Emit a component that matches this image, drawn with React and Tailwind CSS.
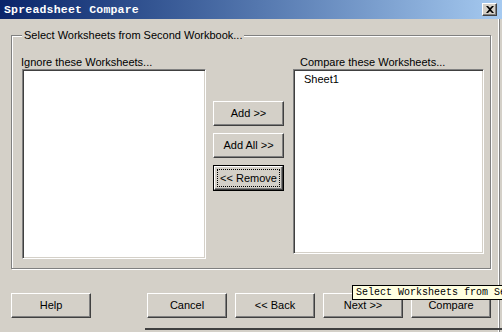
import React from "react";

const raised =
  "border border-t-white border-l-white border-r-[#404040] border-b-[#404040] shadow-[inset_-1px_-1px_0_#808080,inset_1px_1px_0_#d4d0c8] bg-[#d4d0c8]";

function Btn({ children, className = "", focused = false }) {
  if (focused) {
    return (
      <div className={`relative flex items-center justify-center border border-black bg-[#d4d0c8] ${className}`}>
        <div className="absolute inset-0 border border-t-white border-l-white border-r-[#404040] border-b-[#404040] shadow-[inset_-1px_-1px_0_#808080]" />
        <div className="absolute inset-[3px] border border-dotted border-black" />
        <span className="relative">{children}</span>
      </div>
    );
  }
  return (
    <div className={`flex items-center justify-center ${raised} ${className}`}>
      <span>{children}</span>
    </div>
  );
}

const sunken =
  "bg-white border border-t-[#808080] border-l-[#808080] border-b-white border-r-white shadow-[inset_1px_1px_0_#404040,inset_-1px_-1px_0_#d4d0c8]";

export default function App() {
  return (
    <div
      className="relative w-[502px] h-[332px] overflow-hidden bg-[#d4d0c8] flex flex-col text-[11px] text-black"
      style={{ fontFamily: '"Liberation Sans", Arial, sans-serif' }}
    >
      {/* Title bar */}
      <div className="h-[19px] flex items-center justify-between pl-[4px] pr-[5px] bg-gradient-to-r from-[#0a246a] to-[#a6caf0]">
        <span
          className="text-white font-bold text-[11.5px] leading-none tracking-[0.2px]"
          style={{ fontFamily: '"Liberation Mono", "Courier New", monospace' }}
        >
          Spreadsheet Compare
        </span>
        <div className={`w-[15px] h-[13px] flex items-center justify-center ${raised}`}>
          <svg width="8" height="7" viewBox="0 0 8 7">
            <path d="M0 0h2l2 2 2-2h2L5 3.5 8 7H6L4 5 2 7H0l3-3.5z" fill="#000" />
          </svg>
        </div>
      </div>

      {/* Body */}
      <div className="flex-1 flex flex-col pl-[11px] pr-[11px] pt-[16px]">
        {/* Group box */}
        <div className="relative h-[234px] border border-[#808080] shadow-[1px_1px_0_#fff,inset_1px_1px_0_#fff]">
          <span className="absolute left-[10px] top-[-8px] px-[2px] bg-[#d4d0c8] leading-[14px]">
            Select Worksheets from Second Workbook...
          </span>
          <div className="flex pl-[10px] pt-[19px]">
            <div className="flex flex-col">
              <span className="ml-[-1px] leading-[14px] h-[14px]">Ignore these Worksheets...</span>
              <div className={`w-[184px] h-[190px] ${sunken}`} />
            </div>
            <div className="flex flex-col gap-[7px] ml-[7px] mt-[46px]">
              <Btn className="w-[71px] h-[25px]">Add &gt;&gt;</Btn>
              <Btn className="w-[71px] h-[25px]">Add All &gt;&gt;</Btn>
              <Btn className="w-[71px] h-[26px]" focused>
                &lt;&lt; Remove
              </Btn>
            </div>
            <div className="flex flex-col ml-[9px]">
              <span className="ml-[7px] leading-[14px] h-[14px]">Compare these Worksheets...</span>
              <div className={`w-[191px] h-[185px] ${sunken} pl-[10px] pt-[1px]`}>
                <span className="leading-[13px]">Sheet1</span>
              </div>
            </div>
          </div>
        </div>

        {/* Bottom buttons */}
        <div className="flex mt-[24px] gap-[8px]">
          <Btn className="w-[80px] h-[25px]">Help</Btn>
          <div className="w-[40px]" />
          <Btn className="w-[80px] h-[25px]">Cancel</Btn>
          <Btn className="w-[80px] h-[25px]">&lt;&lt; Back</Btn>
          <Btn className="w-[80px] h-[25px]">Next &gt;&gt;</Btn>
          <Btn className="w-[80px] h-[25px]">Compare</Btn>
        </div>
      </div>

      {/* Right window edge */}
      <div className="absolute top-[19px] bottom-0 left-[498px] w-[1px] bg-white" />
      <div className="absolute top-[19px] bottom-0 left-[499px] w-[1px] bg-[#808080]" />

      {/* Window behind bottom edge */}
      <div className="absolute left-[145px] right-0 top-[328px] h-[2px] bg-[#404040]" />

      {/* Tooltip */}
      <div
        className="absolute left-[352px] top-[285px] h-[15px] pl-[3px] pr-[3px] border border-black bg-[#ffffe1] whitespace-nowrap text-[10px] leading-[13px]"
        style={{ fontFamily: '"Liberation Mono", "Courier New", monospace' }}
      >
        Select Worksheets from Second Workbook...
      </div>
    </div>
  );
}
